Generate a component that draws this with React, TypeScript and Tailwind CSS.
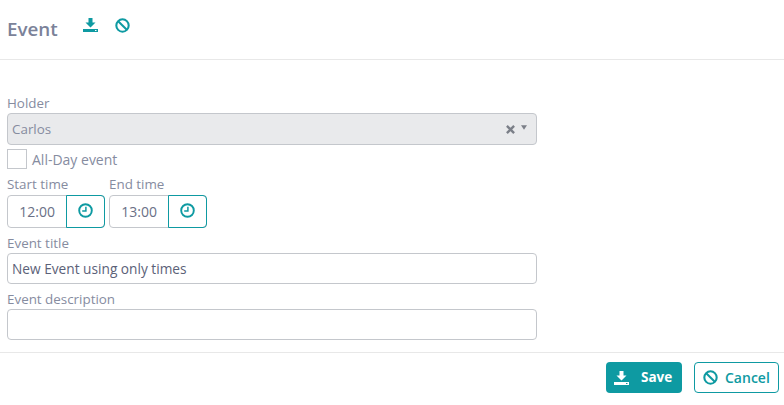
const font = "[font-family:'Open_Sans',sans-serif]";

function DownloadIcon({ className }: { className?: string }) {
  return (
    <svg viewBox="0 0 15 14" className={className} fill="currentColor">
      <path d="M5.5 0h4v4.5h3L7.5 9.5l-5-5h3z" />
      <path fillRule="evenodd" d="M0 11h15v3H0zM12 12v1h1.5v-1z" />
    </svg>
  );
}

function BanIcon({ className }: { className?: string }) {
  return (
    <svg viewBox="0 0 16 16" className={className} fill="none" stroke="currentColor" strokeWidth="2.2">
      <circle cx="8" cy="8" r="6.6" />
      <path d="M3.4 3.4l9.2 9.2" />
    </svg>
  );
}

function ClockIcon() {
  return (
    <svg viewBox="0 0 15 15" className="h-[15px] w-[15px]" fill="none" stroke="currentColor">
      <circle cx="7.5" cy="7.5" r="6.3" strokeWidth="1.9" />
      <path d="M7.9 3.8v4.1H4.2" strokeWidth="1.5" />
    </svg>
  );
}

function TimeField({ label, value }: { label: string; value: string }) {
  return (
    <div className="w-[98px]">
      <div className="h-[18px] text-[13.4px] leading-[18px] text-[#868c9f]">{label}</div>
      <div className="mt-[2px] flex h-[33px] rounded border border-[#c4c7cc]">
        <div className="flex w-[59px] items-center justify-center text-[14px] text-[#6a7086]">{value}</div>
        <div className="-my-px -mr-px flex w-[39px] items-center justify-center rounded-r border border-[#0e9aa2] pb-[2px] text-[#0e9aa2]">
          <ClockIcon />
        </div>
      </div>
    </div>
  );
}

export default function App() {
  return (
    <div className={`${font} h-[405px] w-[784px] overflow-hidden bg-white`}>
      <header className="flex h-[60px] items-start border-b border-[#e8e8e8] pl-[7px]">
        <h1 className="mt-[16px] w-[51px] text-[18.8px] leading-[26px] font-semibold text-[#7b8299]">Event</h1>
        <div className="mt-[18px] ml-[25px] text-[#0e9aa2]">
          <DownloadIcon className="h-[14px] w-[15px]" />
        </div>
        <div className="mt-[18px] ml-[17px] text-[#0e9aa2]">
          <BanIcon className="h-[15px] w-[15px]" />
        </div>
      </header>

      <main className="h-[292px] w-[537px] pt-[34px] pl-[7px]">
        <label className="block h-[19px] text-[13.4px] leading-[18px] text-[#868c9f]">Holder</label>
        <div className="flex h-[32px] items-center justify-between rounded border border-[#c4c7cc] bg-[#e9eaec] pr-[9px] pl-[4px] text-[13.4px] text-[#868c9f]">
          <span>Carlos</span>
          <span className="flex items-center gap-[6px] text-[#7b7f88]">
            <svg viewBox="0 0 10 10" className="h-[9px] w-[9px]" stroke="currentColor" strokeWidth="2.6">
              <path d="M1 1l8 8M9 1l-8 8" />
            </svg>
            <svg viewBox="0 0 8 6" className="mb-[3px] h-[5px] w-[6px]" fill="currentColor">
              <path d="M0 0h8L4 6z" />
            </svg>
          </span>
        </div>

        <div className="mt-[4px] flex h-[20px] items-center">
          <span className="h-[20px] w-[20px] border border-[#c4c7cc] bg-white" />
          <span className="ml-[5px] pt-[1px] text-[14px] text-[#868c9f]">All-Day event</span>
        </div>

        <div className="mt-[6px] flex gap-[4px]">
          <TimeField label="Start time" value="12:00" />
          <TimeField label="End time" value="13:00" />
        </div>

        <label className="mt-[6px] block h-[18px] text-[13.4px] leading-[18px] text-[#868c9f]">Event title</label>
        <div className="mt-px flex h-[31px] items-center rounded border border-[#c4c7cc] pt-[1px] pl-[4px] text-[13.7px] text-[#5b6178]">
          New Event using only times
        </div>
        <label className="mt-[6px] block h-[18px] text-[13.4px] leading-[18px] text-[#868c9f]">Event description</label>
        <div className="mt-px h-[31px] rounded border border-[#c4c7cc]" />
      </main>

      <footer className="flex h-[53px] justify-end gap-[12px] border-t border-[#e8e8e8] pt-[9px] pr-[5px]">
        <button className="flex h-[31px] w-[76px] items-center rounded bg-[#0e9aa2] pl-[8px] text-[13.5px] font-bold text-white">
          <DownloadIcon className="mt-[1px] h-[14px] w-[15px]" />
          <span className="ml-[12px]">Save</span>
        </button>
        <button className="flex h-[31px] w-[85px] items-center rounded border border-[#0e9aa2] pl-[8px] text-[14px] font-semibold text-[#0e9aa2]">
          <BanIcon className="h-[15px] w-[15px]" />
          <span className="ml-[7px]">Cancel</span>
        </button>
      </footer>
    </div>
  );
}
